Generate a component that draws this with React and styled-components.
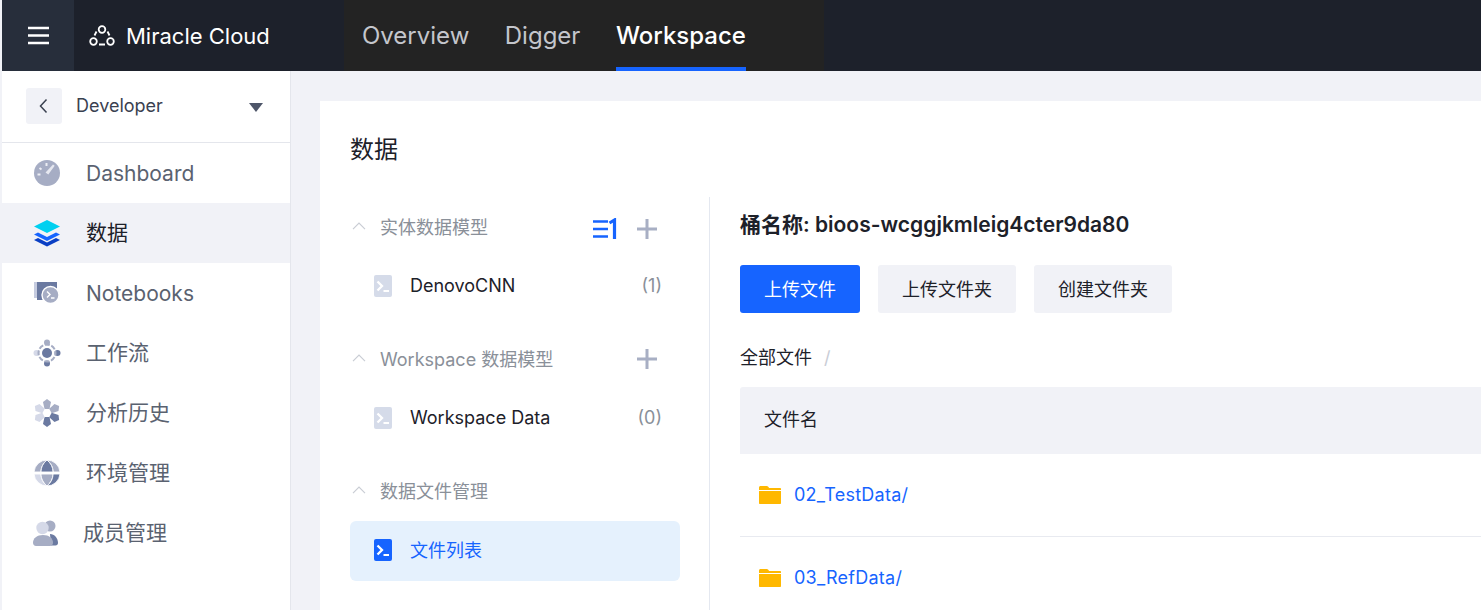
import React from "react";
import styled, { createGlobalStyle } from "styled-components";

const fontStack = `Inter, "Noto Sans CJK SC", sans-serif`;

const GlobalStyle = createGlobalStyle`
  html, body {
    margin: 0;
    padding: 0;
    height: 610px;
    overflow: hidden;
    background: #f1f2f7;
    font-family: ${fontStack};
  }
  * { box-sizing: border-box; }
`;

const Page = styled.div`
  width: 1481px;
  height: 610px;
  overflow: hidden;
  padding-left: 2px;
  display: flex;
  flex-direction: column;
`;

const Header = styled.header`
  height: 71px;
  flex: none;
  display: flex;
  background: #1d212b;
`;

const MenuButton = styled.div`
  width: 72px;
  background: #272e3b;
  display: flex;
  align-items: center;
  justify-content: center;
`;

const Brand = styled.div`
  width: 270px;
  display: flex;
  align-items: center;
  gap: 11px;
  padding-left: 15px;
  color: #fff;
  font-size: 22px;
`;

const TopNav = styled.nav`
  width: 480px;
  background: #232323;
  display: flex;
  gap: 35.5px;
  padding-left: 18px;
`;

const TopTab = styled.div`
  height: 71px;
  line-height: 71px;
  font-size: 24px;
  font-weight: ${(p) => (p.$active ? 500 : 400)};
  color: ${(p) => (p.$active ? "#fff" : "#c4c6cc")};
  border-bottom: 4px solid ${(p) => (p.$active ? "#1664ff" : "transparent")};
`;

const Body = styled.div`
  flex: 1;
  display: flex;
  min-height: 0;
`;

const Sidebar = styled.aside`
  width: 289px;
  flex: none;
  background: #fff;
  border-right: 1px solid #e4e6ec;
`;

const WorkspaceRow = styled.div`
  height: 72px;
  border-bottom: 1px solid #e4e6ec;
  display: flex;
  align-items: center;
  padding: 0 27px 2px 24px;
  font-size: 18px;
  color: #3a4150;
`;

const BackButton = styled.div`
  width: 36px;
  height: 36px;
  border-radius: 3px;
  background: #f1f2f7;
  display: flex;
  align-items: center;
  justify-content: center;
  margin-right: 14px;
`;

const WorkspaceName = styled.span`
  flex: 1;
`;

const Caret = styled.span`
  width: 0;
  height: 0;
  margin-top: 4px;
  border-left: 7.5px solid transparent;
  border-right: 7.5px solid transparent;
  border-top: 9px solid #4e5669;
`;

const NavRow = styled.div`
  height: 60px;
  display: flex;
  align-items: center;
  padding-left: ${(p) => p.$pad || 84}px;
  padding-bottom: ${(p) => (p.$cjk ? 4 : 0)}px;
  position: relative;
  font-size: 21px;
  color: ${(p) => (p.$active ? "#1d2129" : "#5a6270")};
  background: ${(p) => (p.$active ? "#f1f2f7" : "transparent")};
`;

const NavIcon = styled.svg`
  position: absolute;
  left: 30px;
  top: 15px;
  width: 30px;
  height: 30px;
`;

const Main = styled.main`
  flex: 1;
  min-width: 0;
  padding: 30px 0 0 29px;
`;

const Card = styled.section`
  background: #fff;
  height: 520px;
  padding: 0 0 0 30px;
`;

const CardTitle = styled.h1`
  margin: 0;
  height: 96px;
  padding-top: 31px;
  line-height: 36px;
  font-size: 24px;
  font-weight: 400;
  color: #1d2129;
`;

const Columns = styled.div`
  display: flex;
  height: 424px;
`;

const ModelPanel = styled.div`
  width: 360px;
  flex: none;
  padding-right: 29px;
  border-right: 1px solid #e4e8f0;
`;

const GroupHead = styled.div`
  height: 60px;
  display: flex;
  align-items: center;
  font-size: 18px;
  color: #8a9099;
  padding: 0 22px 2px 0;
`;

const GroupChevron = styled.svg`
  width: 14px;
  height: 8px;
  margin: 0 14px 0 2px;
`;

const GroupLabel = styled.span`
  flex: 1;
`;

const HeadIcon = styled.svg`
  width: ${(p) => p.$w || 22}px;
  height: 22px;
  margin-left: ${(p) => p.$gap || 0}px;
  margin-top: ${(p) => p.$shift || 0}px;
`;

const ModelRow = styled.div`
  height: 60px;
  display: flex;
  align-items: center;
  padding: 0 18px ${(p) => (p.$active ? 4 : 3)}px 24px;
  margin-bottom: ${(p) => p.$after || 0}px;
  border-radius: 6px;
  font-size: 18px;
  color: ${(p) => (p.$active ? "#1664ff" : "#1d2129")};
  background: ${(p) => (p.$active ? "#e5f1fd" : "transparent")};
`;

const ModelIcon = styled.svg`
  width: 18px;
  height: 22px;
  margin: 1px 18px 0 0;
`;

const ModelName = styled.span`
  flex: 1;
`;

const ModelCount = styled.span`
  color: #8a9099;
`;

const FilePanel = styled.div`
  flex: 1;
  min-width: 0;
  padding-left: 30px;
`;

const BucketName = styled.div`
  height: 28px;
  margin-top: 14px;
  line-height: 28px;
  font-size: 21px;
  font-weight: 600;
  color: #1d2129;
`;

const Actions = styled.div`
  display: flex;
  gap: 18px;
  margin-top: 26px;
`;

const Action = styled.button`
  height: 48px;
  padding: 0 24px 2px;
  border: 0;
  border-radius: 3px;
  font-family: ${fontStack};
  font-size: 18px;
  color: ${(p) => (p.$primary ? "#fff" : "#1d2129")};
  background: ${(p) => (p.$primary ? "#1664ff" : "#f1f2f7")};
`;

const Crumbs = styled.div`
  margin-top: 32px;
  height: 26px;
  line-height: 26px;
  font-size: 18px;
  color: #1d2129;
  display: flex;
  gap: 12px;
`;

const CrumbSlash = styled.span`
  color: #c9cdd6;
`;

const TableHead = styled.div`
  margin-top: 16px;
  height: 67px;
  background: #f1f2f7;
  border-radius: 3px 0 0 0;
  display: flex;
  align-items: center;
  padding: 0 0 6px 24px;
  font-size: 18px;
  color: #1d2129;
`;

const FileRow = styled.div`
  height: 83px;
  display: flex;
  align-items: center;
  padding: 0 0 2px 18px;
  gap: 12px;
  font-size: 18px;
  letter-spacing: 0.25px;
  color: #1664ff;
  border-bottom: 1px solid #e8eaf0;
`;

const FolderIcon = styled.svg`
  width: 24px;
  height: 20px;
  margin-top: 2px;
`;

const Folder = () => (
  <FolderIcon viewBox="0 0 24 20">
    <path d="M1 2.500C1 1.700 1.700 1 2.500 1h6.300c.5 0 .9.2 1.200.6L11.200 3H22c.6 0 1 .4 1 1v1H1z" fill="#ffb800" />
    <path d="M1 6h22v12c0 .6-.4 1-1 1H2c-.6 0-1-.4-1-1z" fill="#ffb800" />
  </FolderIcon>
);

const Terminal = ({ bg }) => (
  <ModelIcon viewBox="0 0 18 22">
    <rect x="0" y="0" width="18" height="22" rx="2" fill={bg} />
    <path d="M3.500 6.500l4.500 4.500-4.500 4.500" fill="none" stroke="#fff" strokeWidth="2.300" />
    <path d="M9.500 16h5.500" stroke="#fff" strokeWidth="2" />
  </ModelIcon>
);

const Plus = ({ gap, shift }) => (
  <HeadIcon $gap={gap} $shift={shift} viewBox="0 0 22 22">
    <path d="M11 1v20M1 11h20" stroke="#a8afc4" strokeWidth="3" />
  </HeadIcon>
);

const Chevron = () => (
  <GroupChevron viewBox="0 0 14 8">
    <path d="M1 7.200l6-6 6 6" fill="none" stroke="#c9cdd4" strokeWidth="1.200" />
  </GroupChevron>
);

const icons = {
  dashboard: (
    <>
      <circle cx="15" cy="15" r="13" fill="#a6adc4" />
      <path d="M21 6.500l-7.500 8 2.800 2 6.400-8.800z" fill="#e6e8f0" />
      <path d="M7.500 10l2 1.500M5.500 16.500h3M14.500 5v3" stroke="#eceef4" strokeWidth="2" />
    </>
  ),
  data: (
    <>
      <path d="M2 22l4-2 9 4.500 9-4.500 4 2-13 6.500z" fill="#0a3fc4" />
      <path d="M2 16.500l4-2 9 4.500 9-4.500 4 2-13 6.500z" fill="#1664ff" />
      <path d="M15 2l13 6.500L15 15 2 8.500z" fill="#00d0f0" />
    </>
  ),
  notebooks: (
    <>
      <rect x="2" y="4" width="3" height="16" fill="#c6cce0" />
      <rect x="5" y="4" width="20" height="18" fill="#6b7aa1" />
      <circle cx="18.500" cy="17" r="8.500" fill="#a6adc4" stroke="#fff" strokeWidth="1.400" />
      <path d="M15 13.500l3 3-3 3M19 20h3.500" fill="none" stroke="#fff" strokeWidth="1.400" />
    </>
  ),
  flow: (
    <>
      <circle cx="15" cy="15" r="5" fill="#6b7aa1" />
      <circle cx="15" cy="4.500" r="3" fill="#a6adc4" />
      <circle cx="15" cy="25.500" r="3" fill="#6b7aa1" />
      <circle cx="4.500" cy="15" r="3" fill="#d5d9e8" />
      <circle cx="25.500" cy="15" r="3" fill="#6b7aa1" />
      <circle cx="15" cy="15" r="8.500" fill="none" stroke="#a6adc4" strokeWidth="2" strokeDasharray="5 1.680" strokeDashoffset="2.500" />
    </>
  ),
  history: (
    <>
      {["#a6adc4", "#a6adc4", "#6b7aa1", "#6b7aa1", "#d5d9e8", "#d5d9e8"].map((fill, i) => (
        <path
          key={i}
          d="M15 1l4 3-1.500 7h-5L11 4z"
          fill={fill}
          transform={`rotate(${i * 60} 15 15)`}
        />
      ))}
    </>
  ),
  env: (
    <g stroke="#fff" strokeWidth="0.9">
      <path d="M15 2A13 13 0 0 0 2 14h7c0-4.500 2-8.500 6-12z" fill="#a6adc4" />
      <path d="M15 2A13 13 0 0 1 28 14h-7c0-4.500-2-8.500-6-12z" fill="#a6adc4" />
      <path d="M15 2c-3.800 3.300-6 7-6 12h12c0-5-2.200-8.700-6-12z" fill="#6b7aa1" />
      <path d="M2 16a13 13 0 0 0 13 12c-4-3.500-6-7.500-6-12z" fill="#d5d9e8" />
      <path d="M9 16c0 4.500 2.200 8.700 6 12 3.800-3.300 6-7.500 6-12z" fill="#a6adc4" />
      <path d="M28 16a13 13 0 0 1-13 12c4-3.500 6-7.500 6-12z" fill="#6b7aa1" />
    </g>
  ),
  member: (
    <>
      <circle cx="18" cy="8" r="5.500" fill="#a6adc4" />
      <path d="M18 16c4.500 0 8 4 8 9 0 1.500-1 2.500-2.500 2.500H19z" fill="#6b7aa1" />
      <circle cx="10.500" cy="10" r="6.200" fill="#d5d9e8" />
      <path d="M11 17c-6 0-10 3.500-10 7.500C1 26.500 2.200 28 4 28h14c1.800 0 3-1.500 3-3.500C21 20.500 17 17 11 17z" fill="#a6adc4" />
    </>
  ),
};

const navItems = [
  { key: "dashboard", label: "Dashboard" },
  { key: "data", label: "数据", active: true, cjk: true },
  { key: "notebooks", label: "Notebooks" },
  { key: "flow", label: "工作流", cjk: true },
  { key: "history", label: "分析历史", cjk: true },
  { key: "env", label: "环境管理", cjk: true },
  { key: "member", label: "成员管理", cjk: true, pad: 81 },
];

export default function App() {
  return (
    <Page>
      <GlobalStyle />
      <Header>
        <MenuButton>
          <svg width="21" height="19" viewBox="0 0 21 19">
            <path d="M0 2h21M0 9.500h21M0 17h21" stroke="#fff" strokeWidth="2.700" />
          </svg>
        </MenuButton>
        <Brand>
          <svg width="26" height="24" viewBox="0 0 26 24" fill="none" stroke="#fff" strokeWidth="1.800">
            <circle cx="13" cy="5.500" r="3.300" />
            <circle cx="4.500" cy="17.500" r="3.300" />
            <circle cx="21.500" cy="17.500" r="3.300" />
            <path d="M10 20.500h6M7.500 7.500L5.500 11.500M18.500 7.500l2 4" />
          </svg>
          Miracle Cloud
        </Brand>
        <TopNav>
          <TopTab>Overview</TopTab>
          <TopTab>Digger</TopTab>
          <TopTab $active>Workspace</TopTab>
        </TopNav>
      </Header>
      <Body>
        <Sidebar>
          <WorkspaceRow>
            <BackButton>
              <svg width="12" height="16" viewBox="0 0 12 16">
                <path d="M8.500 1.500L2.500 8l6 6.500" fill="none" stroke="#3a4150" strokeWidth="1.500" />
              </svg>
            </BackButton>
            <WorkspaceName>Developer</WorkspaceName>
            <Caret />
          </WorkspaceRow>
          {navItems.map((item) => (
            <NavRow key={item.key} $active={item.active} $pad={item.pad} $cjk={item.cjk}>
              <NavIcon viewBox="0 0 30 30">{icons[item.key]}</NavIcon>
              {item.label}
            </NavRow>
          ))}
        </Sidebar>
        <Main>
          <Card>
            <CardTitle>数据</CardTitle>
            <Columns>
              <ModelPanel>
                <GroupHead>
                  <Chevron />
                  <GroupLabel>实体数据模型</GroupLabel>
                  <HeadIcon $w={26} $shift={6} viewBox="0 0 26 22">
                    <path d="M1 3.500h15M1 11h15M1 18.500h15" stroke="#1664ff" strokeWidth="2.600" />
                    <path d="M17.500 5L22.500 2V21" fill="none" stroke="#1664ff" strokeWidth="3.200" />
                  </HeadIcon>
                  <Plus gap={18} shift={6} />
                </GroupHead>
                <ModelRow $after={12}>
                  <Terminal bg="#d5dbe9" />
                  <ModelName>DenovoCNN</ModelName>
                  <ModelCount>(1)</ModelCount>
                </ModelRow>
                <GroupHead>
                  <Chevron />
                  <GroupLabel>Workspace 数据模型</GroupLabel>
                  <Plus shift={2} />
                </GroupHead>
                <ModelRow $after={12}>
                  <Terminal bg="#d5dbe9" />
                  <ModelName>Workspace Data</ModelName>
                  <ModelCount>(0)</ModelCount>
                </ModelRow>
                <GroupHead>
                  <Chevron />
                  <GroupLabel>数据文件管理</GroupLabel>
                </GroupHead>
                <ModelRow $active>
                  <Terminal bg="#1664ff" />
                  <ModelName>文件列表</ModelName>
                </ModelRow>
              </ModelPanel>
              <FilePanel>
                <BucketName>桶名称: bioos-wcggjkmleig4cter9da80</BucketName>
                <Actions>
                  <Action $primary>上传文件</Action>
                  <Action>上传文件夹</Action>
                  <Action>创建文件夹</Action>
                </Actions>
                <Crumbs>
                  全部文件
                  <CrumbSlash>/</CrumbSlash>
                </Crumbs>
                <TableHead>文件名</TableHead>
                <FileRow>
                  <Folder />
                  02_TestData/
                </FileRow>
                <FileRow>
                  <Folder />
                  03_RefData/
                </FileRow>
              </FilePanel>
            </Columns>
          </Card>
        </Main>
      </Body>
    </Page>
  );
}
